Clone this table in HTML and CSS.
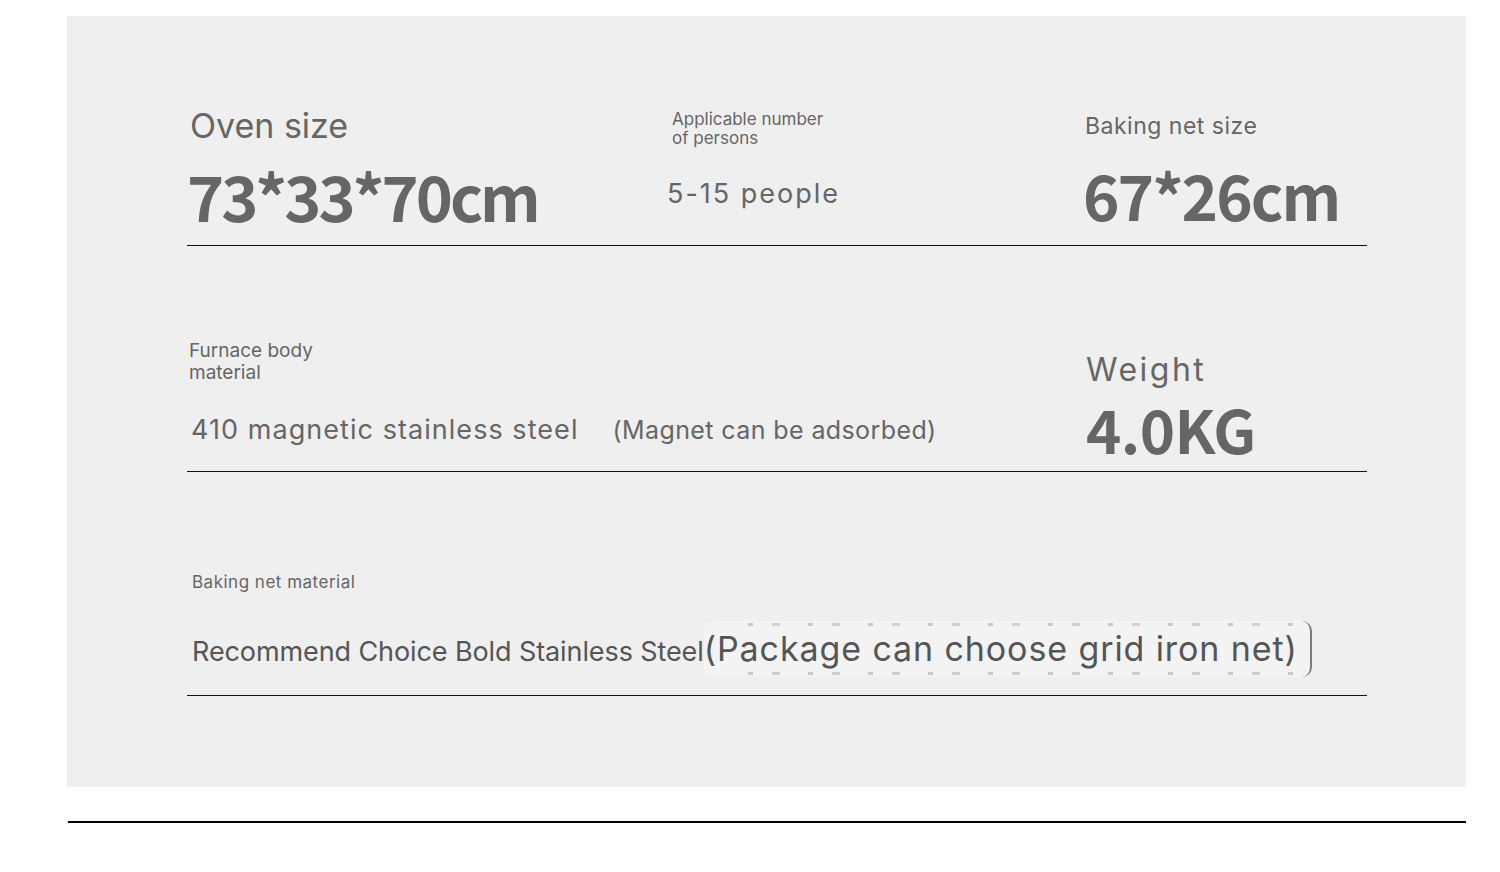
FILE: index.html
```html
<!DOCTYPE html>
<html>
<head>
<meta charset="utf-8">
<link rel="stylesheet" href="styles.css">
</head>
<body>
<div class="panel">
  <div class="row row1">
    <div class="col c1">
      <div class="lbl-34">Oven size</div>
      <div class="big big-a">73*33*70cm</div>
    </div>
    <div class="col c2">
      <div class="lbl-17">Applicable number<br>of persons</div>
      <div class="people">5-15 people</div>
    </div>
    <div class="col c3">
      <div class="lbl-23">Baking net size</div>
      <div class="big big-b">67*26cm</div>
    </div>
  </div>
  <div class="row row2">
    <div class="col r2left">
      <div class="lbl-19">Furnace body<br>material</div>
      <div class="valline">
        <span class="val-27">410 magnetic stainless steel</span>
        <span class="val-25">(Magnet can be adsorbed)</span>
      </div>
    </div>
    <div class="col r2right">
      <div class="lbl-32">Weight</div>
      <div class="big big-c">4.0KG</div>
    </div>
  </div>
  <div class="row row3">
    <div class="col r3">
      <div class="lbl-17b">Baking net material</div>
      <div class="valline3">
        <span class="val-28">Recommend Choice Bold Stainless Steel</span><span class="pkg">(Package can choose grid iron net)</span>
      </div>
    </div>
  </div>
</div>
<div class="rule"></div>
</body>
</html>
```
FILE: styles.css
```css
html, body {
  margin: 0;
  padding: 0;
  background: #ffffff;
}
body {
  font-family: Inter, "Noto Sans CJK SC", sans-serif;
  color: #666666;
}
.panel {
  margin: 16px 0 0 67px;
  width: 1399px;
  height: 771px;
  background: #efefef;
  padding: 0 99px 0 120px;
  box-sizing: border-box;
}
.row {
  border-bottom: 1px solid #111;
  box-sizing: content-box;
}
.row1 {
  height: 229px;
  display: grid;
  grid-template-columns: 480px 416px 1fr;
}
.row2 {
  height: 225px;
  display: grid;
  grid-template-columns: 899px 1fr;
}
.row3 {
  height: 223px;
}
.col {
  display: flex;
  flex-direction: column;
  align-items: flex-start;
}
.c1 { padding-top: 93px; }
.c2 { padding-top: 94px; }
.c3 { padding-top: 99px; }
.lbl-34 {
  font-size: 34px;
  line-height: 34px;
  padding-left: 3px;
}
.lbl-17 {
  font-size: 17px;
  line-height: 19px;
  padding-left: 5px;
}
.lbl-23 {
  font-size: 23px;
  line-height: 23px;
  padding-left: 2px;
  letter-spacing: 0.5px;
}
.big {
  font-family: "Noto Sans CJK SC", sans-serif;
  font-weight: 700;
  color: #666666;
}
.big-a {
  font-size: 63px;
  line-height: 63px;
  margin-top: 20px;
  letter-spacing: -3px;
}
.big-b {
  font-size: 62px;
  line-height: 62px;
  margin-top: 25px;
  letter-spacing: -2px;
}
.people {
  margin-top: 32px;
  font-size: 27px;
  line-height: 27px;
  letter-spacing: 2px;
}
.val-27 {
  font-size: 27px;
  line-height: 27px;
  letter-spacing: 1.05px;
}
.r2left {
  padding-top: 94px;
  padding-left: 2px;
}
.lbl-19 {
  font-size: 19px;
  line-height: 22px;
}
.valline {
  margin-top: 32px;
  display: flex;
  align-items: baseline;
  gap: 34px;
  padding-left: 2px;
}
.val-25 {
  font-size: 25px;
  line-height: 25px;
  letter-spacing: 0.4px;
}
.r2right {
  padding-top: 108px;
}
.lbl-32 {
  font-size: 32px;
  line-height: 32px;
  letter-spacing: 2.5px;
}
.big-c {
  font-size: 60px;
  line-height: 60px;
  margin-top: 12px;
  letter-spacing: -0.6px;
}
.r3 {
  padding-top: 102px;
  padding-left: 5px;
}
.lbl-17b {
  font-size: 17px;
  line-height: 17px;
  letter-spacing: 0.5px;
}
.valline3 {
  margin-top: 30px;
  display: flex;
  align-items: baseline;
}
.val-28 {
  font-size: 27px;
  line-height: 27px;
  letter-spacing: -0.1px;
  color: #555555;
}
.pkg {
  position: relative;
  font-size: 34px;
  line-height: 56px;
  letter-spacing: 0.9px;
  color: #555555;
  background: #f3f3f3;
  border-radius: 10px;
  border-right: 2px solid #7a7a7a;
  padding: 0 12px 0 0;
}
.pkg::before,
.pkg::after {
  content: "";
  position: absolute;
  left: 44px;
  right: 10px;
  height: 3px;
  background: repeating-linear-gradient(90deg, #8a8a8a 0 5px, transparent 5px 24px, #9a9a9a 24px 32px, transparent 32px 60px);
  opacity: 0.4;
}
.pkg::before { top: 2px; }
.pkg::after { bottom: 2px; }
.rule {
  margin: 34px 0 0 68px;
  width: 1398px;
  height: 2px;
  background: #000;
}
```
